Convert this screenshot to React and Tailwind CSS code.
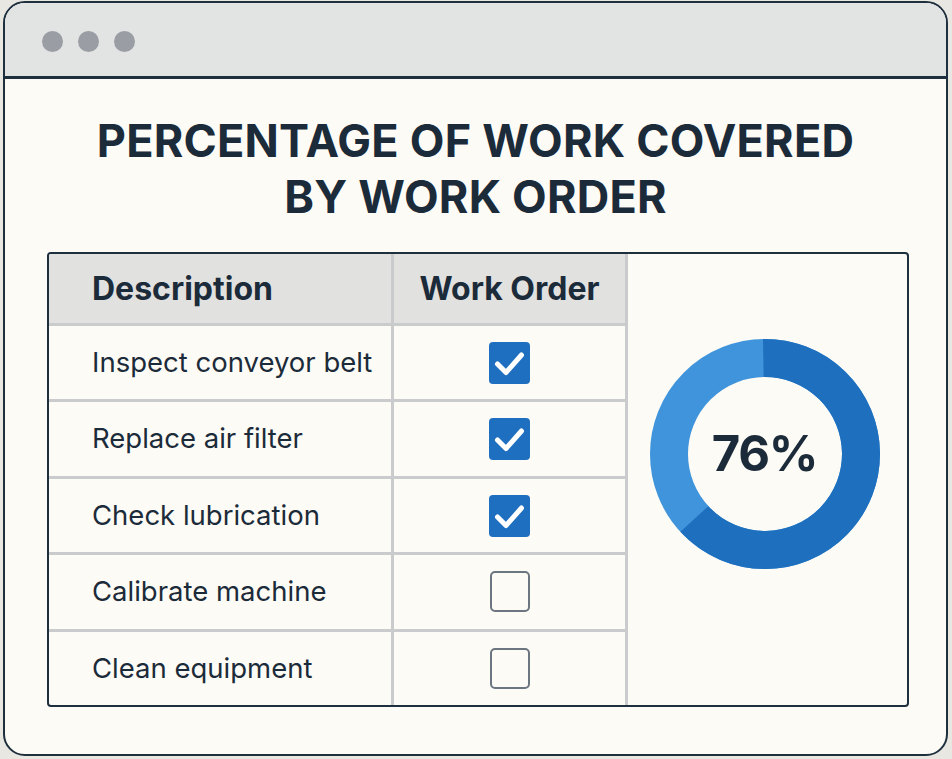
import React from 'react';

const tasks = [
  { label: 'Inspect conveyor belt', done: true },
  { label: 'Replace air filter', done: true },
  { label: 'Check lubrication', done: true },
  { label: 'Calibrate machine', done: false },
  { label: 'Clean equipment', done: false },
];

const CheckBox = ({ done }) =>
  done ? (
    <div className="w-[41px] h-[42px] rounded-[4px] bg-[#1f6fc0]">
      <svg width="41" height="42" viewBox="0 0 41 42" fill="none">
        <path d="M8.5 22l8.5 8.5L32.5 13" stroke="#fff" strokeWidth="5" strokeLinecap="round" strokeLinejoin="round" />
      </svg>
    </div>
  ) : (
    <div className="w-[40px] h-[41px] rounded-[5px] border-[2.5px] border-[#6c7681]" />
  );

// donut: dark segment from top clockwise, light segment for the rest
const Donut = ({ value }) => {
  const r = 96;
  const c = 2 * Math.PI * r;
  const dark = (228 / 360) * c;
  return (
    <div className="relative w-[232px] h-[232px]">
      <svg width="232" height="232" viewBox="0 0 232 232">
        <circle cx="116" cy="116" r={r} fill="none" stroke="#3f94dc" strokeWidth="38" />
        <circle
          cx="116"
          cy="116"
          r={r}
          fill="none"
          stroke="#1e6fbd"
          strokeWidth="38"
          strokeDasharray={`${dark} ${c}`}
          transform="rotate(-91 116 116)"
        />
      </svg>
      <div className="absolute inset-0 flex items-center justify-center text-[49px] font-bold tracking-tight text-[#1c2b3a]">
        {value}%
      </div>
    </div>
  );
};

export default function App() {
  return (
    <div
      className="w-[952px] h-[759px] bg-[#e9e7e2] pt-[1px] pl-[3px] pr-[4px] pb-[3px]"
      style={{ fontFamily: "Inter, 'Liberation Sans', sans-serif" }}
    >
      <div className="h-full border-2 border-[#1e2f3d] rounded-[22px] overflow-hidden bg-[#fdfbf5] flex flex-col">
        {/* Window title bar */}
        <div className="h-[76px] shrink-0 bg-[#e2e3e3] border-b-[3px] border-[#1e2f3d] flex items-center gap-[15px] pl-[37px] pt-[3px]">
          <span className="w-[21px] h-[21px] rounded-full bg-[#9a9ea4]" />
          <span className="w-[21px] h-[21px] rounded-full bg-[#9a9ea4]" />
          <span className="w-[21px] h-[21px] rounded-full bg-[#9a9ea4]" />
        </div>

        {/* Heading */}
        <h1 className="mt-[34px] text-center text-[45px] leading-[56px] font-bold tracking-[0.005em] text-[#1c2b3a]">
          PERCENTAGE OF WORK COVERED
          <br />
          BY WORK ORDER
        </h1>

        {/* Table + chart */}
        <div className="mt-[27px] ml-[42px] w-[862px] h-[455px] border-2 border-[#1e2f3d] rounded-[4px] flex overflow-hidden">
          <div className="w-[579px] flex flex-col border-r-[3px] border-[#c9cbcc]">
            <div className="h-[72px] shrink-0 flex bg-[#e1e1e0] border-b-[3px] border-[#c9cbcc]">
              <div className="w-[345px] border-r-[3px] border-[#c9cbcc] flex items-center pl-[43px] text-[32px] font-bold text-[#1c2b3a]">
                Description
              </div>
              <div className="flex-1 flex items-center justify-center text-[32px] font-bold text-[#1c2b3a]">
                Work Order
              </div>
            </div>
            {tasks.map((t, i) => (
              <div
                key={t.label}
                className={`flex-1 flex ${i < tasks.length - 1 ? 'border-b-[3px] border-[#c9cbcc]' : ''}`}
              >
                <div className="w-[345px] border-r-[3px] border-[#c9cbcc] flex items-center pl-[43px] text-[27.5px] text-[#1c2b3a]">
                  {t.label}
                </div>
                <div className="flex-1 flex items-center justify-center">
                  <CheckBox done={t.done} />
                </div>
              </div>
            ))}
          </div>
          <div className="flex-1 flex justify-center pt-[84px] pr-[6px]">
            <Donut value={76} />
          </div>
        </div>
      </div>
    </div>
  );
}
